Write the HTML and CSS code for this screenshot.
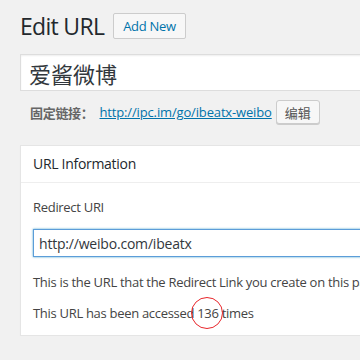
FILE: index.html
```html
<!DOCTYPE html>
<html lang="zh-CN">
<head>
    <meta charset="UTF-8">
    <title>Edit URL</title>
    <link rel="stylesheet" href="styles.css">
</head>
<body>
    <div class="wrap">
        <div class="heading">
            <h1 class="page-title">Edit URL</h1>
            <a class="add-new" href="#">Add New</a>
        </div>

        <input class="title-input" type="text" value="爱酱微博">

        <div class="permalink">
            <strong class="permalink-label">固定链接：</strong>
            <a class="permalink-url" href="#">http://ipc.im/go/ibeatx-weibo</a>
            <button class="edit-btn">编辑</button>
        </div>

        <div class="postbox">
            <h2 class="postbox-title">URL Information</h2>
            <div class="inside">
                <p class="field-label">Redirect URI</p>
                <input class="url-input" type="text" value="http://weibo.com/ibeatx">
                <p class="desc">This is the URL that the Redirect Link you create on this page will redirect to.</p>
                <p class="count">This URL has been accessed <span class="hits">136<span class="ring"></span></span> times</p>
            </div>
        </div>
    </div>
</body>
</html>
```

FILE: styles.css
```css
body {
    margin: 0;
    background-color: #f1f1f1;
    color: #444;
    font-family: 'Open Sans', 'Noto Sans CJK SC', sans-serif;
    font-size: 13px;
    letter-spacing: -0.3px;
    overflow: hidden;
}

.wrap {
    width: 440px;
    padding: 13px 0 0 20px;
}

.heading {
    display: flex;
    align-items: center;
    gap: 9px;
    height: 26px;
}

.page-title {
    margin: 0;
    font-size: 23px;
    font-weight: 400;
    letter-spacing: -0.7px;
    color: #23282d;
    line-height: 26px;
}

.add-new {
    display: inline-block;
    height: 24px;
    line-height: 24px;
    padding: 0 9px;
    border: 1px solid #ccc;
    border-radius: 2px;
    background: #f7f7f7;
    color: #0073aa;
    text-decoration: none;
    font-size: 13px;
    font-weight: 500;
}

.title-input {
    display: block;
    box-sizing: border-box;
    width: 100%;
    height: 37px;
    margin-top: 15px;
    padding: 3px 8px;
    border: 1px solid #ddd;
    box-shadow: inset 0 1px 2px rgba(0, 0, 0, 0.07);
    font-family: 'Open Sans', 'Noto Sans CJK SC', sans-serif;
    font-size: 22px;
    color: #32373c;
    outline: none;
}

.permalink {
    display: flex;
    align-items: center;
    height: 24px;
    margin-top: 9px;
    padding-left: 10px;
}

.permalink-label {
    color: #666;
    margin-right: 6px;
}

.permalink-url {
    color: #0073aa;
    letter-spacing: -0.15px;
}

.edit-btn {
    height: 24px;
    margin-left: 4px;
    padding: 0 8px;
    border: 1px solid #ccc;
    border-radius: 3px;
    background: #f7f7f7;
    box-shadow: 0 1px 0 #ccc;
    color: #555;
    font-family: 'Open Sans', 'Noto Sans CJK SC', sans-serif;
    font-size: 13px;
}

.postbox {
    margin-top: 21px;
    background: #fff;
    border: 1px solid #e5e5e5;
    box-shadow: 0 1px 1px rgba(0, 0, 0, 0.04);
}

.postbox-title {
    margin: 0;
    height: 36px;
    line-height: 36px;
    padding: 0 12px;
    border-bottom: 1px solid #eee;
    font-size: 14px;
    font-weight: 400;
    color: #23282d;
}

.inside {
    padding: 14px 12px 12px;
}

.inside p {
    margin: 0;
    line-height: 20px;
    white-space: nowrap;
}

.url-input {
    display: block;
    box-sizing: border-box;
    width: 100%;
    height: 28px;
    margin: 12px 0 15px;
    padding: 3px 5px;
    border: 1px solid #5b9dd9;
    box-shadow: 0 0 2px rgba(30, 140, 190, 0.8);
    font-family: 'Open Sans', sans-serif;
    font-size: 14px;
    letter-spacing: -0.2px;
    color: #32373c;
    outline: none;
}

.count {
    margin-top: 11px !important;
}

.hits {
    position: relative;
}

.ring {
    position: absolute;
    left: 50%;
    top: 50%;
    width: 32px;
    height: 32px;
    margin: -16px 0 0 -17px;
    border: 1px solid #e8262b;
    border-radius: 50%;
    box-sizing: border-box;
}
```
